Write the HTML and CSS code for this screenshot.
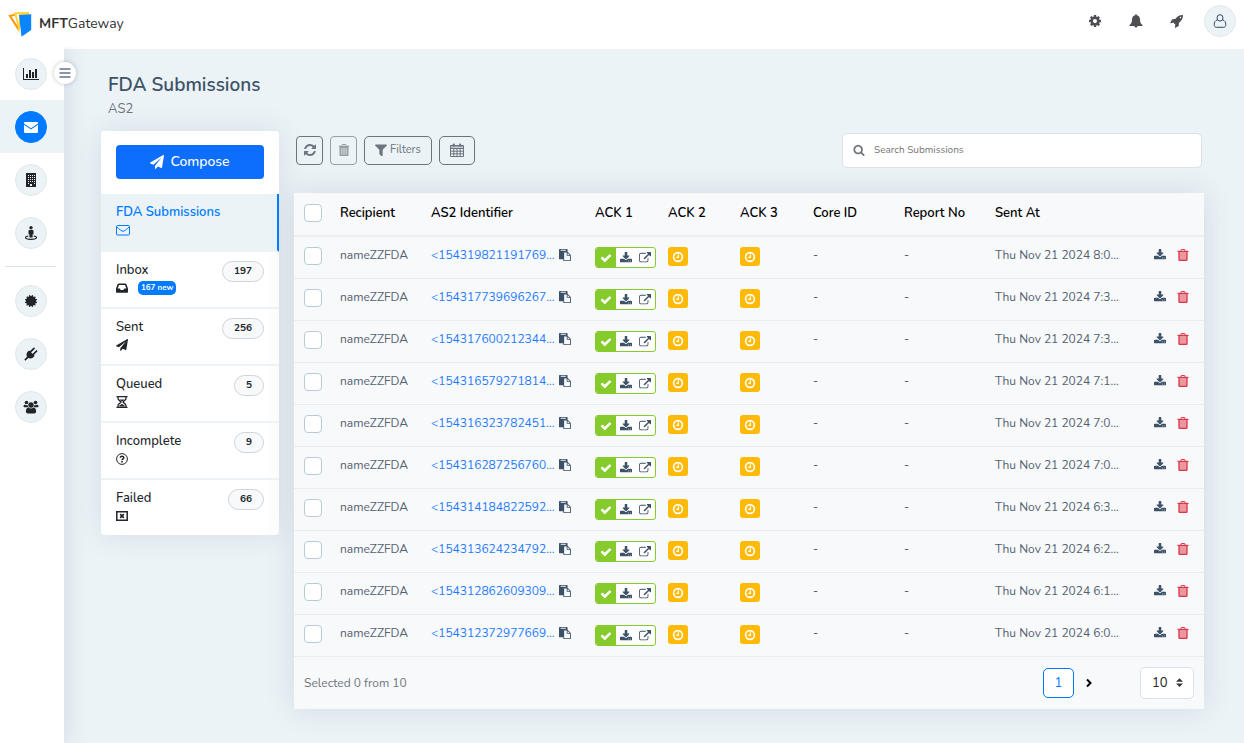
FILE: index.html
```html
<!DOCTYPE html>
<html lang="en">
<head>
<meta charset="utf-8">
<title>MFTGateway - FDA Submissions</title>
<link rel="stylesheet" href="styles.css">
</head>
<body>
<svg class="sprite" aria-hidden="true">
  <symbol id="i-gear" viewBox="0 0 1792 1792"><path d="M1152 896q0-106-75-181t-181-75-181 75-75 181 75 181 181 75 181-75 75-181zm512-109v222q0 12-8 23t-20 13l-185 28q-19 54-39 91 35 50 107 138 10 12 10 25t-9 23q-27 37-99 108t-94 71q-12 0-26-9l-138-108q-44 23-91 38-16 136-29 186-7 28-36 28h-222q-14 0-24.500-8.500t-11.500-21.500l-28-184q-49-16-90-37l-141 107q-10 9-25 9-14 0-25-11-126-114-165-168-7-10-7-23 0-12 8-23 15-21 51-66.500t54-70.500q-27-50-41-99l-183-27q-13-2-21-12.500t-8-23.500v-222q0-12 8-23t19-13l186-28q14-46 39-92-40-57-107-138-10-12-10-24 0-10 9-23 26-36 98.500-107.500t94.500-71.500q13 0 26 10l138 107q44-23 91-38 16-136 29-186 7-28 36-28h222q14 0 24.500 8.500t11.500 21.500l28 184q49 16 90 37l142-107q9-9 24-9 13 0 25 10 129 119 165 170 7 8 7 22 0 12-8 23-15 21-51 66.500t-54 70.500q26 50 41 98l183 28q13 2 21 12.500t8 23.500z"/></symbol>
  <symbol id="i-bell" viewBox="0 0 14 14"><path d="M7 .3c.5 0 .9.4.8 1C10 1.800 11 3.500 11 5.300c0 3 .7 4.400 2.500 5.600V12H8.600a1.600 1.600 0 0 1-3.200 0H.5v-1.100C2.300 9.700 3 8.300 3 5.300c0-1.800 1-3.500 3.200-4-.1-.6.3-1 .8-1z"/></symbol>
  <symbol id="i-rocket" viewBox="0 0 1792 1792"><path d="M1440 448q0-40-28-68t-68-28-68 28-28 68 28 68 68 28 68-28 28-68zm224-288q0 249-75.500 430.500t-253.500 360.500q-81 80-195 176l-20 379q-2 16-16 26l-384 224q-7 4-16 4-12 0-23-9l-64-64q-13-14-8-32l85-276-281-281-276 85q-3 1-9 1-14 0-23-9l-64-64q-17-19-5-39l224-384q10-14 26-16l379-20q96-114 176-195 188-187 358-258t431-71q14 0 24 9.500t10 22.500z"/></symbol>
  <symbol id="i-user" viewBox="0 0 14 14"><path fill="none" stroke="currentColor" stroke-width="1" d="M7 .7a3 3.200 0 0 1 3 3.200A3 3.200 0 0 1 4 3.900 3 3.200 0 0 1 7 .7zM4.300 6C2.200 6.500 1.200 8.200 1.200 10.500c0 1.800.9 2.800 2.300 2.800h7c1.400 0 2.300-1 2.300-2.800 0-2.300-1-4-3.100-4.500"/></symbol>
  <symbol id="i-chart" viewBox="0 0 2048 1792"><path d="M640 896v512h-256v-512h256zm384-512v1024h-256v-1024h256zm1024 1152v128h-2048v-1536h128v1408h1920zm-640-896v768h-256v-768h256zm384-384v1152h-256v-1152h256z"/></symbol>
  <symbol id="i-mail" viewBox="0 0 14 12"><path d="M0 2c0-.6.400-1 1-1h12c.6 0 1 .4 1 1v.4L7 7.300 0 2.400zM0 3.700l7 4.900 7-4.900V11c0 .5-.4.900-1 .9H1c-.6 0-1-.4-1-.9z"/></symbol>
  <symbol id="i-mail-o" viewBox="0 0 14 12"><path fill="none" stroke="currentColor" d="M1.500 1.500h11c.6 0 1 .4 1 1v7.500c0 .6-.4 1-1 1h-11c-.6 0-1-.4-1-1V2.500c0-.6.400-1 1-1zM.7 2.700C3 5.200 6 7.300 7 7.300s4-2.100 6.300-4.600"/></symbol>
  <symbol id="i-building" viewBox="0 0 14 14"><path fill-rule="evenodd" d="M2 0h10v14H2zM4 2v1h1V2zm2 0v1h1V2zm2 0v1h1V2zm2 0v1h1V2zM4 4v1h1V4zm2 0v1h1V4zm2 0v1h1V4zm2 0v1h1V4zM4 6v1h1V6zm2 0v1h1V6zm2 0v1h1V6zm2 0v1h1V6zM4 8v1h1V8zm2 0v1h1V8zm2 0v1h1V8zm2 0v1h1V8zM4 10v1h1v-1zm6 0v1h1v-1zM6 11v2h2v-2z"/></symbol>
  <symbol id="i-street" viewBox="0 0 14 14"><circle cx="7" cy="1.800" r="1.700"/><path d="M5.400 4h3.200c.6 0 .9.400.9.900v3.400h-.9V11.500H5.400V8.300h-.9V4.900c0-.5.300-.9.900-.9z"/><path fill="none" stroke="currentColor" stroke-width="1.200" d="M4.300 10C2.500 10.300 1.500 10.900 1.500 11.500c0 1 2.300 1.800 5.500 1.800s5.500-.8 5.500-1.800c0-.6-1-1.200-2.800-1.500"/></symbol>
  <symbol id="i-cert" viewBox="0 0 1792 1792"><path d="M1504 896l138 135q30 28 20 70-12 41-52 51l-188 48 53 186q12 41-19 70-29 31-70 19l-186-53-48 188q-10 40-51 52-12 2-19 2-31 0-51-22l-135-138-135 138q-28 30-70 20-41-11-51-52l-48-188-186 53q-41 12-70-19-31-29-19-70l53-186-188-48q-40-10-52-51-10-42 20-70l138-135-138-135q-30-28-20-70 12-41 52-51l188-48-53-186q-12-41 19-70 29-31 70-19l186 53 48-188q10-41 51-51 41-12 70 19l135 139 135-139q29-30 70-19 41 10 51 51l48 188 186-53q41-12 70 19 31 29 19 70l-53 186 188 48q40 10 52 51 10 42-20 70z"/></symbol>
  <symbol id="i-plug" viewBox="0 0 14 14"><path d="M5.200 3.400 10.600 8.800C9.500 10.800 7 12.200 4.300 11L1.400 13.700.3 12.600 3 9.700C1.800 7 3.200 4.500 5.200 3.400z"/><path fill="none" stroke="currentColor" stroke-width="1.700" stroke-linecap="round" d="M6.700 4.700 10 1.400M9.300 7.300 12.600 4"/></symbol>
  <symbol id="i-users" viewBox="0 0 15 14"><circle cx="7.500" cy="5" r="2.700"/><circle cx="3" cy="2.500" r="1.800"/><circle cx="12" cy="2.500" r="1.800"/><path d="M5 7.500c1.500 1.200 3.500 1.200 5 0 1.900.2 2.600 2 2.600 4 0 1.200-.8 2-2 2H4.400c-1.200 0-2-.8-2-2 0-2 .7-3.800 2.600-4zM1.600 4.700c.9.600 1.900.6 2.600.2 0 1 .2 1.700.7 2.300H1.500C.6 7.200 0 6.800 0 6.200c0-.9.5-1.500 1.600-1.500zM13.400 4.700c-.9.600-1.900.6-2.600.2 0 1-.2 1.700-.7 2.300h3.400c.9 0 1.500-.4 1.500-1 0-.9-.5-1.500-1.600-1.500z"/></symbol>
  <symbol id="i-menu" viewBox="0 0 12 12"><path d="M.5 1.200h11v1.500H.5zM.5 5.200h11v1.500H.5zM.5 9.200h11v1.500H.5z"/></symbol>
  <symbol id="i-plane" viewBox="0 0 1792 1792"><path d="M1764 11q33 24 27 64l-256 1536q-5 29-32 45-14 8-31 8-11 0-24-5l-453-185-242 295q-18 23-49 23-13 0-22-4-19-7-30.500-23.500t-11.500-36.500v-349l864-1059-1069 925-395-162q-37-14-40-55-2-40 32-59l1664-960q15-9 32-9 20 0 36 11z"/></symbol>
  <symbol id="i-inbox" viewBox="0 0 12 12"><path fill-rule="evenodd" d="M2.600 1.500h6.800c.4 0 .7.200.9.600L12 6.500V10c0 .4-.3.700-.7.700H.7C.3 10.700 0 10.400 0 10V6.500l1.700-4.400c.2-.4.500-.6.900-.6zM3 3 1.700 6.500h2.200l.7 1.500h2.800l.7-1.500h2.200L9 3z"/></symbol>
  <symbol id="i-hourglass" viewBox="0 0 12 12"><path d="M.5 0h11v1.300H.5zM.5 10.700h11V12H.5z"/><path fill="none" stroke="currentColor" stroke-width="1.300" d="M2 1v1.500C2 4.500 5 5 5 6s-3 1.500-3 3.500V11M10 1v1.500C10 4.500 7 5 7 6s3 1.500 3 3.500V11"/><path d="M3 10.600c.3-1.600 2-1.800 3-2.800 1 1 2.700 1.200 3 2.800zM3.500 3.500h5L6 5.500z"/></symbol>
  <symbol id="i-question" viewBox="0 0 12 12"><circle cx="6" cy="6" r="5.400" fill="none" stroke="currentColor"/><path fill="none" stroke="currentColor" stroke-width="1.500" d="M4.200 4.700C4.300 3.700 5 3.200 6 3.200s1.800.6 1.800 1.500C7.800 5.800 6 5.800 6 7.200"/><path d="M5.200 8h1.600v1.500H5.200z"/></symbol>
  <symbol id="i-failed" viewBox="0 0 12 10"><path fill="none" stroke="currentColor" stroke-width="1.500" d="M.8.800h10.400v8.400H.8z"/><path fill="none" stroke="currentColor" stroke-width="1.700" d="m4.200 3.200 3.600 3.600m0-3.600L4.200 6.800"/></symbol>
  <symbol id="i-refresh" viewBox="0 0 1792 1792"><path d="M1639 1056q0 5-1 7-64 268-268 434.500t-478 166.500q-146 0-282.500-55t-243.500-157l-129 129q-19 19-45 19t-45-19-19-45v-448q0-26 19-45t45-19h448q26 0 45 19t19 45-19 45l-137 137q71 66 161 102t187 36q134 0 250-65t186-179q11-17 53-117 8-23 30-23h192q13 0 22.500 9.500t9.500 22.500zm25-800v448q0 26-19 45t-45 19h-448q-26 0-45-19t-19-45 19-45l138-138q-148-137-349-137-134 0-250 65t-186 179q-11 17-53 117-8 23-30 23h-199q-13 0-22.500-9.500t-9.500-22.500v-7q65-268 270-434.500t480-166.500q146 0 284 55.500t245 156.500l130-129q19-19 45-19t45 19 19 45z"/></symbol>
  <symbol id="i-trash" viewBox="0 0 12 12"><path fill="none" stroke="currentColor" d="M4 2V.9c0-.2.200-.4.400-.4h3.200c.2 0 .4.200.4.400V2"/><path d="M.5 1.800h11V3H.5z"/><path fill="none" stroke="currentColor" stroke-width="1.300" d="M2 3v7.600c0 .5.400.8.800.8h6.400c.4 0 .8-.3.800-.8V3"/><path d="M2 3h8v8H2z" opacity=".5"/></symbol>
  <symbol id="i-trash-bars" viewBox="0 0 12 12"><path fill="none" stroke="currentColor" d="M4 2V.9c0-.2.200-.4.400-.4h3.200c.2 0 .4.200.4.400V2"/><path fill-rule="evenodd" d="M.8 1.800h10.400V3h-.7v8c0 .6-.4 1-1 1h-7c-.6 0-1-.4-1-1V3H.8zM3.500 4v6.500h.8V4zm2.100 0v6.500h.8V4zm2.100 0v6.500h.8V4z"/></symbol>
  <symbol id="i-filter" viewBox="192 192 1408 1408"><path d="M1595 295q17 41-14 70l-493 493v742q0 42-39 59-13 5-25 5-27 0-45-19l-256-256q-19-19-19-45v-486l-493-493q-31-29-14-70 17-39 59-39h1280q42 0 59 39z"/></symbol>
  <symbol id="i-calendar" viewBox="0 0 14 14"><path fill="none" stroke="currentColor" d="M.5 2.500h13v11H.5zM.5 5.500h13M.5 8.200h13M.5 10.800h13M3.800 5v8.500M7 5v8.500M10.200 5v8.500"/><path d="M.5 2.500h13v2H.5z" opacity=".6"/><rect x="2.800" y=".4" width="2" height="3.400" rx=".8"/><rect x="9.200" y=".4" width="2" height="3.400" rx=".8"/></symbol>
  <symbol id="i-search" viewBox="0 0 1792 1792"><path d="M1216 832q0-185-131.500-316.500t-316.500-131.500-316.500 131.500-131.500 316.500 131.500 316.500 316.500 131.500 316.500-131.500 131.500-316.500zm512 832q0 52-38 90t-90 38q-54 0-90-38l-343-342q-179 124-399 124-143 0-273.500-55.500t-225-150-150-225-55.500-273.500 55.500-273.500 150-225 225-150 273.500-55.500 273.500 55.500 225 150 150 225 55.500 273.500q0 220-124 399l343 343q37 37 37 90z"/></symbol>
  <symbol id="i-paste" viewBox="0 0 1792 1792"><path d="M768 1664h896v-640h-416q-40 0-68-28t-28-68v-416h-384v1152zm256-1440v-64q0-13-9.500-22.500t-22.500-9.500h-704q-13 0-22.500 9.500t-9.500 22.500v64q0 13 9.500 22.500t22.500 9.500h704q13 0 22.500-9.500t9.500-22.500zm256 672h299l-299-299v299zm512 128v672q0 40-28 68t-68 28h-960q-40 0-68-28t-28-68v-160h-544q-40 0-68-28t-28-68v-1344q0-40 28-68t68-28h1088q40 0 68 28t28 68v328q21 13 36 28l408 408q28 28 48 76t20 88z"/></symbol>
  <symbol id="i-check" viewBox="0 0 1792 1792"><path d="M1671 566q0 40-28 68l-724 724-136 136q-28 28-68 28t-68-28l-136-136-362-362q-28-28-28-68t28-68l136-136q28-28 68-28t68 28l294 295 656-657q28-28 68-28t68 28l136 136q28 28 28 68z"/></symbol>
  <symbol id="i-download" viewBox="0 0 1792 1792"><path d="M1344 1344q0-26-19-45t-45-19-45 19-19 45 19 45 45 19 45-19 19-45zm256 0q0-26-19-45t-45-19-45 19-19 45 19 45 45 19 45-19 19-45zm192-224v320q0 40-28 68t-68 28h-1600q-40 0-68-28t-28-68v-320q0-40 28-68t68-28h529l135 136q58 56 136 56t136-56l136-136h528q40 0 68 28t28 68zm-389-569q17 41-14 70l-448 448q-18 19-45 19t-45-19l-448-448q-31-29-14-70 17-39 59-39h256v-448q0-26 19-45t45-19h256q26 0 45 19t19 45v448h256q42 0 59 39z"/></symbol>
  <symbol id="i-external" viewBox="0 0 1792 1792"><path d="M1408 928v320q0 119-84.500 203.500t-203.500 84.500h-832q-119 0-203.500-84.500t-84.500-203.500v-832q0-119 84.500-203.500t203.500-84.500h704q14 0 23 9t9 23v64q0 14-9 23t-23 9h-704q-66 0-113 47t-47 113v832q0 66 47 113t113 47h832q66 0 113-47t47-113v-320q0-14 9-23t23-9h64q14 0 23 9t9 23zm384-864v512q0 26-19 45t-45 19-45-19l-176-176-652 652q-10 10-23 10t-23-10l-114-114q-10-10-10-23t10-23l652-652-176-176q-19-19-19-45t19-45 45-19h512q26 0 45 19t19 45z"/></symbol>
  <symbol id="i-clock" viewBox="0 0 12 12"><circle cx="6" cy="6" r="4.400" fill="none" stroke="currentColor" stroke-width="1.600"/><path fill="none" stroke="currentColor" stroke-width="1.200" d="M6.400 3.300v3.100H4.200"/></symbol>
  <symbol id="i-next" viewBox="0 0 8 10"><path fill="none" stroke="currentColor" stroke-width="2" d="m1.500 1.500 3.500 3.500-3.500 3.500"/></symbol>
</svg>

<header class="topbar">
  <a class="brand" href="#">
    <svg class="brand-mark" viewBox="0 0 24 26"><path fill="#ff9800" d="M.3 4.200 8 2.500l3 18.500z"/><path fill="#fff" d="m3.500 5.500 4-1 2.500 11z"/><path fill="#ffd43b" d="M6 1.300 21 1v3l-8 1-1.500 17z"/><path fill="#fff" d="M8.500 3.500 11 3.300V12z"/><path fill="#0a84ff" d="m11 4 12.200-.8V19l-9.700 6.700z"/></svg>
    <span class="brand-text"><b>MFT</b>Gateway</span>
  </a>
  <div class="top-actions">
    <button class="top-btn" aria-label="Settings"><svg class="ic ic-lg"><use href="#i-gear"/></svg></button>
    <button class="top-btn" aria-label="Notifications"><svg class="ic ic-lg"><use href="#i-bell"/></svg></button>
    <button class="top-btn" aria-label="What's new"><svg class="ic ic-lg"><use href="#i-rocket"/></svg></button>
    <button class="avatar" aria-label="Account"><svg class="ic ic-lg"><use href="#i-user"/></svg></button>
  </div>
</header>

<div class="shell">
  <nav class="rail" aria-label="Main">
    <button class="rail-toggle" aria-label="Toggle menu"><svg class="ic"><use href="#i-menu"/></svg></button>
    <a class="rail-item" href="#" aria-label="Dashboard"><span class="disc"><svg class="ic ic-wide"><use href="#i-chart"/></svg></span></a>
    <a class="rail-item active" href="#" aria-label="Messages"><span class="disc"><svg class="ic ic-lg"><use href="#i-mail"/></svg></span></a>
    <a class="rail-item" href="#" aria-label="Stations"><span class="disc"><svg class="ic ic-lg"><use href="#i-building"/></svg></span></a>
    <a class="rail-item" href="#" aria-label="Partners"><span class="disc"><svg class="ic ic-lg"><use href="#i-street"/></svg></span></a>
    <hr class="rail-line">
    <a class="rail-item" href="#" aria-label="Certificates"><span class="disc"><svg class="ic ic-lg"><use href="#i-cert"/></svg></span></a>
    <a class="rail-item" href="#" aria-label="Integrations"><span class="disc"><svg class="ic ic-lg"><use href="#i-plug"/></svg></span></a>
    <a class="rail-item" href="#" aria-label="Users"><span class="disc"><svg class="ic ic-wide"><use href="#i-users"/></svg></span></a>
  </nav>

  <main class="page">
    <div class="heading">
      <h1>FDA Submissions</h1>
      <p>AS2</p>
    </div>
    <div class="columns">
      <aside class="folders">
        <div class="compose-wrap"><button class="compose"><svg class="ic ic-lg"><use href="#i-plane"/></svg>Compose</button></div>
        <a class="folder current" href="#"><span class="f-name">FDA Submissions</span><svg class="ic ic-lg"><use href="#i-mail-o"/></svg></a>
        <a class="folder" href="#"><span class="f-name">Inbox</span><span class="f-icons"><svg class="ic"><use href="#i-inbox"/></svg><span class="new">167 new</span></span><span class="count">197</span></a>
        <a class="folder" href="#"><span class="f-name">Sent</span><svg class="ic"><use href="#i-plane"/></svg><span class="count">256</span></a>
        <a class="folder" href="#"><span class="f-name">Queued</span><svg class="ic"><use href="#i-hourglass"/></svg><span class="count">5</span></a>
        <a class="folder" href="#"><span class="f-name">Incomplete</span><svg class="ic"><use href="#i-question"/></svg><span class="count">9</span></a>
        <a class="folder" href="#"><span class="f-name">Failed</span><svg class="ic"><use href="#i-failed"/></svg><span class="count">66</span></a>
      </aside>

      <section class="content">
        <div class="toolbar">
          <button class="tool" aria-label="Refresh"><svg class="ic ic-lg"><use href="#i-refresh"/></svg></button>
          <button class="tool" aria-label="Delete selected" disabled><svg class="ic"><use href="#i-trash-bars"/></svg></button>
          <button class="tool roomy"><svg class="ic"><use href="#i-filter"/></svg>Filters</button>
          <button class="tool roomy" aria-label="Date range"><svg class="ic ic-lg"><use href="#i-calendar"/></svg></button>
          <label class="search"><svg class="ic"><use href="#i-search"/></svg><input type="search" placeholder="Search Submissions" aria-label="Search Submissions"></label>
        </div>

        <div class="panel">
          <table class="grid">
            <colgroup><col class="c-check"><col class="c-name"><col class="c-ident"><col class="c-ack"><col class="c-ack2"><col class="c-ack"><col class="c-name"><col class="c-name"><col class="c-sent"><col class="c-act"></colgroup>
            <thead><tr>
              <th><input type="checkbox" class="box" aria-label="Select all"></th>
              <th>Recipient</th><th>AS2 Identifier</th><th>ACK 1</th><th>ACK 2</th><th>ACK 3</th><th>Core ID</th><th>Report No</th><th>Sent At</th><th></th>
            </tr></thead>
            <tbody id="rows"></tbody>
          </table>
          <footer class="panel-foot">
            <span class="selected">Selected 0 from 10</span>
            <button class="page-no">1</button>
            <button class="next" aria-label="Next page"><svg class="ic"><use href="#i-next"/></svg></button>
            <span class="size-wrap"><select class="size" aria-label="Rows per page"><option>10</option><option>25</option><option>50</option></select><svg class="sort" viewBox="0 0 8 10"><path d="M0 4 4 0l4 4zM0 6l4 4 4-4z"/></svg></span>
          </footer>
        </div>
      </section>
    </div>
  </main>
</div>
<script src="rows.js"></script>
</body>
</html>
```
FILE: styles.css
```css
* { box-sizing: border-box; }
body {
  margin: 0;
  min-height: 100vh;
  display: flex;
  flex-direction: column;
  background: #ebf3f7;
  color: #212529;
  font-family: Nunito, Lato, "Open Sans", sans-serif;
  font-size: 13px;
  line-height: 18px;
}
button, input, select { font: inherit; color: inherit; }
button { padding: 0; border: 0; background: none; cursor: pointer; }
a { color: inherit; text-decoration: none; }
.sprite { display: none; }
.ic { width: 12px; height: 12px; fill: currentColor; flex: none; display: block; }
.ic-lg { width: 14px; height: 14px; }
.ic-wide { width: 16px; height: 14px; }

.topbar {
  position: relative;
  z-index: 1;
  height: 47px;
  padding: 0 8px;
  display: flex;
  align-items: center;
  justify-content: space-between;
  background: #fff;
}
.brand { display: flex; align-items: center; gap: 7px; color: #333; }
.brand-mark { width: 24px; height: 26px; }
.brand-text { font-size: 14px; line-height: 20px; }
.brand-text b { font-weight: 700; }
.top-actions { display: flex; align-items: center; gap: 27px; color: #4d4f53; padding-bottom: 5px; }
.top-btn { width: 14px; }
.avatar {
  width: 32px;
  height: 32px;
  display: grid;
  place-items: center;
  border: 1px solid #e1e8ed;
  border-radius: 50%;
  background: #ebf3f7;
  color: #34495e;
  margin-left: -7px;
}

.shell { flex: 1; display: flex; }
.rail {
  position: relative;
  width: 64px;
  flex: none;
  background: #fff;
  box-shadow: 0 0 24px rgba(60, 70, 100, .16);
}
.rail-item { height: 53px; display: flex; align-items: center; padding-left: 15px; }
.rail-item.active { background: #ebf3f7; }
.disc {
  width: 32px;
  height: 32px;
  display: grid;
  place-items: center;
  border: 1px solid #e1e8ec;
  border-radius: 50%;
  background: #ebf3f7;
  color: #212529;
}
.active .disc { background: #007bff; border-color: #007bff; color: #fff; }
.rail-line { height: 1px; margin: 7px 8px 7px 5px; border: 0; background: #dbe4ea; }
.rail-toggle {
  position: absolute;
  top: 15px;
  right: -12px;
  width: 22px;
  height: 22px;
  display: grid;
  place-items: center;
  border-radius: 50%;
  background: #fff;
  color: #64748b;
  box-shadow: 0 0 4px rgba(60, 70, 100, .3);
}

.page { flex: 1; min-width: 0; padding: 24px 40px 34px 37px; border-top: 2px solid #fff; }
.heading { padding-left: 7px; height: 59px; color: #3d5267; }
.heading h1 { margin: 0; font-size: 19px; font-weight: 600; line-height: 24px; }
.heading p { margin: 3px 0 0; color: #6c757d; }
.columns { display: grid; grid-template-columns: 178px minmax(0, 1fr); column-gap: 15px; align-items: start; }

.folders { background: #fff; border-radius: 3px; margin-top: -1px; box-shadow: 0 0 28px rgba(60, 70, 100, .12); }
.compose-wrap { padding: 14px 15px 15px; }
.compose {
  width: 100%;
  height: 34px;
  display: flex;
  align-items: center;
  justify-content: center;
  gap: 6px;
  border-radius: 4px;
  background: #0d6efd;
  color: #fff;
  font-size: 14px;
  font-weight: 500;
}
.folder {
  position: relative;
  display: flex;
  flex-direction: column;
  gap: 2px;
  height: 57px;
  padding: 9px 15px;
  border-bottom: 2px solid #ebf3f7;
}
.folder:last-child { height: 55px; border-bottom: 0; }
.folder .ic { height: 14px; }
.f-name { font-weight: 500; line-height: 18px; }
.f-icons { display: flex; align-items: center; gap: 10px; height: 14px; }
.folder.current { height: 58px; background: #ebf3f7; border-right: 2px solid #007bff; color: #007bff; }
.current .f-name { font-weight: 600; }
.new {
  padding: 0 3px;
  border-radius: 5px;
  background: #007bff;
  color: #fff;
  font-size: 8px;
  font-weight: 700;
  line-height: 14px;
}
.count {
  position: absolute;
  top: 9px;
  right: 15px;
  padding: 0 11px;
  border: 1px solid #ced4da;
  border-radius: 11px;
  background: #f8f9fa;
  font-size: 10px;
  font-weight: 700;
  line-height: 19px;
}

.toolbar { display: flex; align-items: center; gap: 7px; height: 36px; padding: 0 2px; }
.tool {
  height: 29px;
  min-width: 27px;
  display: flex;
  align-items: center;
  justify-content: center;
  gap: 3px;
  border: 1px solid #6c757d;
  border-radius: 4px;
  color: #6c757d;
  font-size: 11px;
}
.tool.roomy { padding: 0 10px; border-radius: 5px; }
.tool:disabled { opacity: .65; }
.search {
  width: 360px;
  height: 35px;
  margin-left: auto;
  padding: 0 10px;
  display: flex;
  align-items: center;
  gap: 9px;
  border: 1px solid #dbe2e8;
  border-radius: 5px;
  background: #fff;
  color: #6c757d;
}
.search input { flex: 1; min-width: 0; border: 0; outline: 0; padding: 0; background: none; font-size: 10px; }
.search input::placeholder { color: #757575; }

.panel { margin-top: 25px; background: #f8f9fb; box-shadow: 0 0 28px rgba(60, 70, 100, .14); }
.grid { width: 100%; table-layout: fixed; border-collapse: separate; border-spacing: 0; color: #52616f; font-size: 12px; }
.c-check { width: 36px; }
.c-name { width: 91px; }
.c-ident { width: 164px; }
.c-ack { width: 73px; }
.c-ack2 { width: 72px; }
.c-sent { width: 159px; }
.c-act { width: 60px; }
.grid th { height: 44px; padding: 0 0 2px 10px; border-bottom: 2px solid #ebeff2; color: #000; font-size: 13px; font-weight: 600; text-align: left; }
.grid td { height: 42px; padding: 0 0 6px 10px; border-bottom: 1px solid #e9edf0; white-space: nowrap; }
.grid td.low { padding-bottom: 0; }
.grid td.mid { padding-bottom: 2px; }
.grid td.pick { padding-bottom: 4px; }
.grid th.pick { padding-bottom: 0; padding-top: 2px; }
.box {
  appearance: none;
  display: block;
  width: 18px;
  height: 18px;
  margin: 0;
  border: 1px solid #b9cbd9;
  border-radius: 4px;
  background: #fff;
}
.ident { display: flex; align-items: center; gap: 5px; color: #1f7bff; }
.ident button, .acts { color: #3d5267; }
.ack {
  width: 61px;
  height: 21px;
  display: flex;
  border: 1px solid #86cb2c;
  border-radius: 3px;
  overflow: hidden;
  background: #fff;
  color: #3d5267;
}
.ack > * { flex: 1; display: grid; place-items: center; }
.ack .ok { background: #86cb2c; color: #fff; }
.wait { width: 20px; height: 19px; display: grid; place-items: center; border-radius: 3px; background: #ffba08; color: #fff; }
.acts { display: flex; gap: 11px; }
.acts .del { color: #dc3545; }

.panel-foot { display: flex; align-items: center; height: 52px; padding: 0 10px; font-size: 12px; }
.selected { color: #6c757d; margin-right: auto; }
.page-no { width: 31px; height: 30px; border: 1px solid #007bff; border-radius: 5px; color: #007bff; background: #fff; font-size: 13px; }
.next { margin: 0 46px 0 11px; color: #000; }
.next .ic { width: 9px; height: 10px; }
.size-wrap { position: relative; }
.size { appearance: none; width: 54px; height: 32px; padding: 0 11px; border: 1px solid #dbe2e8; border-radius: 5px; background: #fff; font-size: 13px; }
.sort { position: absolute; right: 11px; top: 11px; width: 7px; height: 9px; fill: #343a40; pointer-events: none; }
```
FILE: rows.js
```js
const submissions = [
  ["154319821191769", "8:0"], ["154317739696267", "7:3"], ["154317600212344", "7:3"],
  ["154316579271814", "7:1"], ["154316323782451", "7:0"], ["154316287256760", "7:0"],
  ["154314184822592", "6:3"], ["154313624234792", "6:2"], ["154312862609309", "6:1"],
  ["154312372977669", "6:0"]
];
const icon = name => `<svg class="ic"><use href="#i-${name}"/></svg>`;
document.getElementById("rows").innerHTML = submissions.map(([id, time]) => `
<tr>
  <td class="pick"><input type="checkbox" class="box" aria-label="Select ${id}"></td>
  <td>nameZZFDA</td>
  <td><div class="ident"><a href="#">&lt;${id}...</a><button aria-label="Copy identifier">${icon("paste")}</button></div></td>
  <td class="low"><div class="ack"><span class="ok">${icon("check")}</span><button aria-label="Download ACK 1">${icon("download")}</button><button aria-label="Open ACK 1">${icon("external")}</button></div></td>
  <td class="mid"><span class="wait">${icon("clock")}</span></td>
  <td class="mid"><span class="wait">${icon("clock")}</span></td>
  <td>-</td>
  <td>-</td>
  <td>Thu Nov 21 2024 ${time}...</td>
  <td><div class="acts"><button aria-label="Download">${icon("download")}</button><button class="del" aria-label="Delete">${icon("trash")}</button></div></td>
</tr>`).join("");
```
